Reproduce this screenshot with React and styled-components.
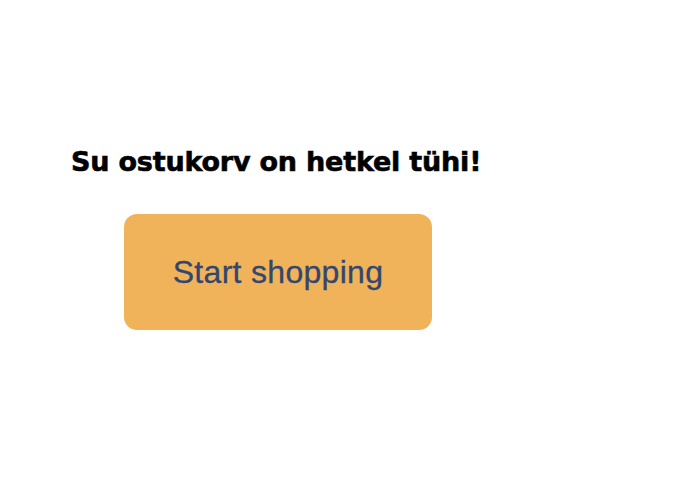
import React from 'react';
import styled, { createGlobalStyle } from 'styled-components';

const GlobalStyle = createGlobalStyle`
  body {
    margin: 0;
    background: #ffffff;
  }
`;

const Page = styled.div`
  display: flex;
  flex-direction: column;
  align-items: flex-start;
  padding: 146px 0 0 71px;
  height: 500px;
  box-sizing: border-box;
`;

const Title = styled.h2`
  margin: 0;
  font-family: "DejaVu Sans", sans-serif;
  font-weight: 700;
  font-size: 27px;
  line-height: 32px;
  letter-spacing: -0.2px;
  color: #000000;
  -webkit-text-stroke: 0.6px #000000;
`;

const ShopButton = styled.button`
  margin: 36px 0 0 53px;
  width: 308px;
  height: 116px;
  display: flex;
  align-items: center;
  justify-content: center;
  border: none;
  border-radius: 13px;
  background: #f0b35a;
  color: #334670;
  font-family: "Liberation Sans", Arial, sans-serif;
  font-size: 32px;
  letter-spacing: 0.3px;
  -webkit-text-stroke: 0.3px #334670;
  cursor: pointer;
`;

export default function App() {
  return (
    <>
      <GlobalStyle />
      <Page>
        <Title>Su ostukorv on hetkel tühi!</Title>
        <ShopButton>Start shopping</ShopButton>
      </Page>
    </>
  );
}
